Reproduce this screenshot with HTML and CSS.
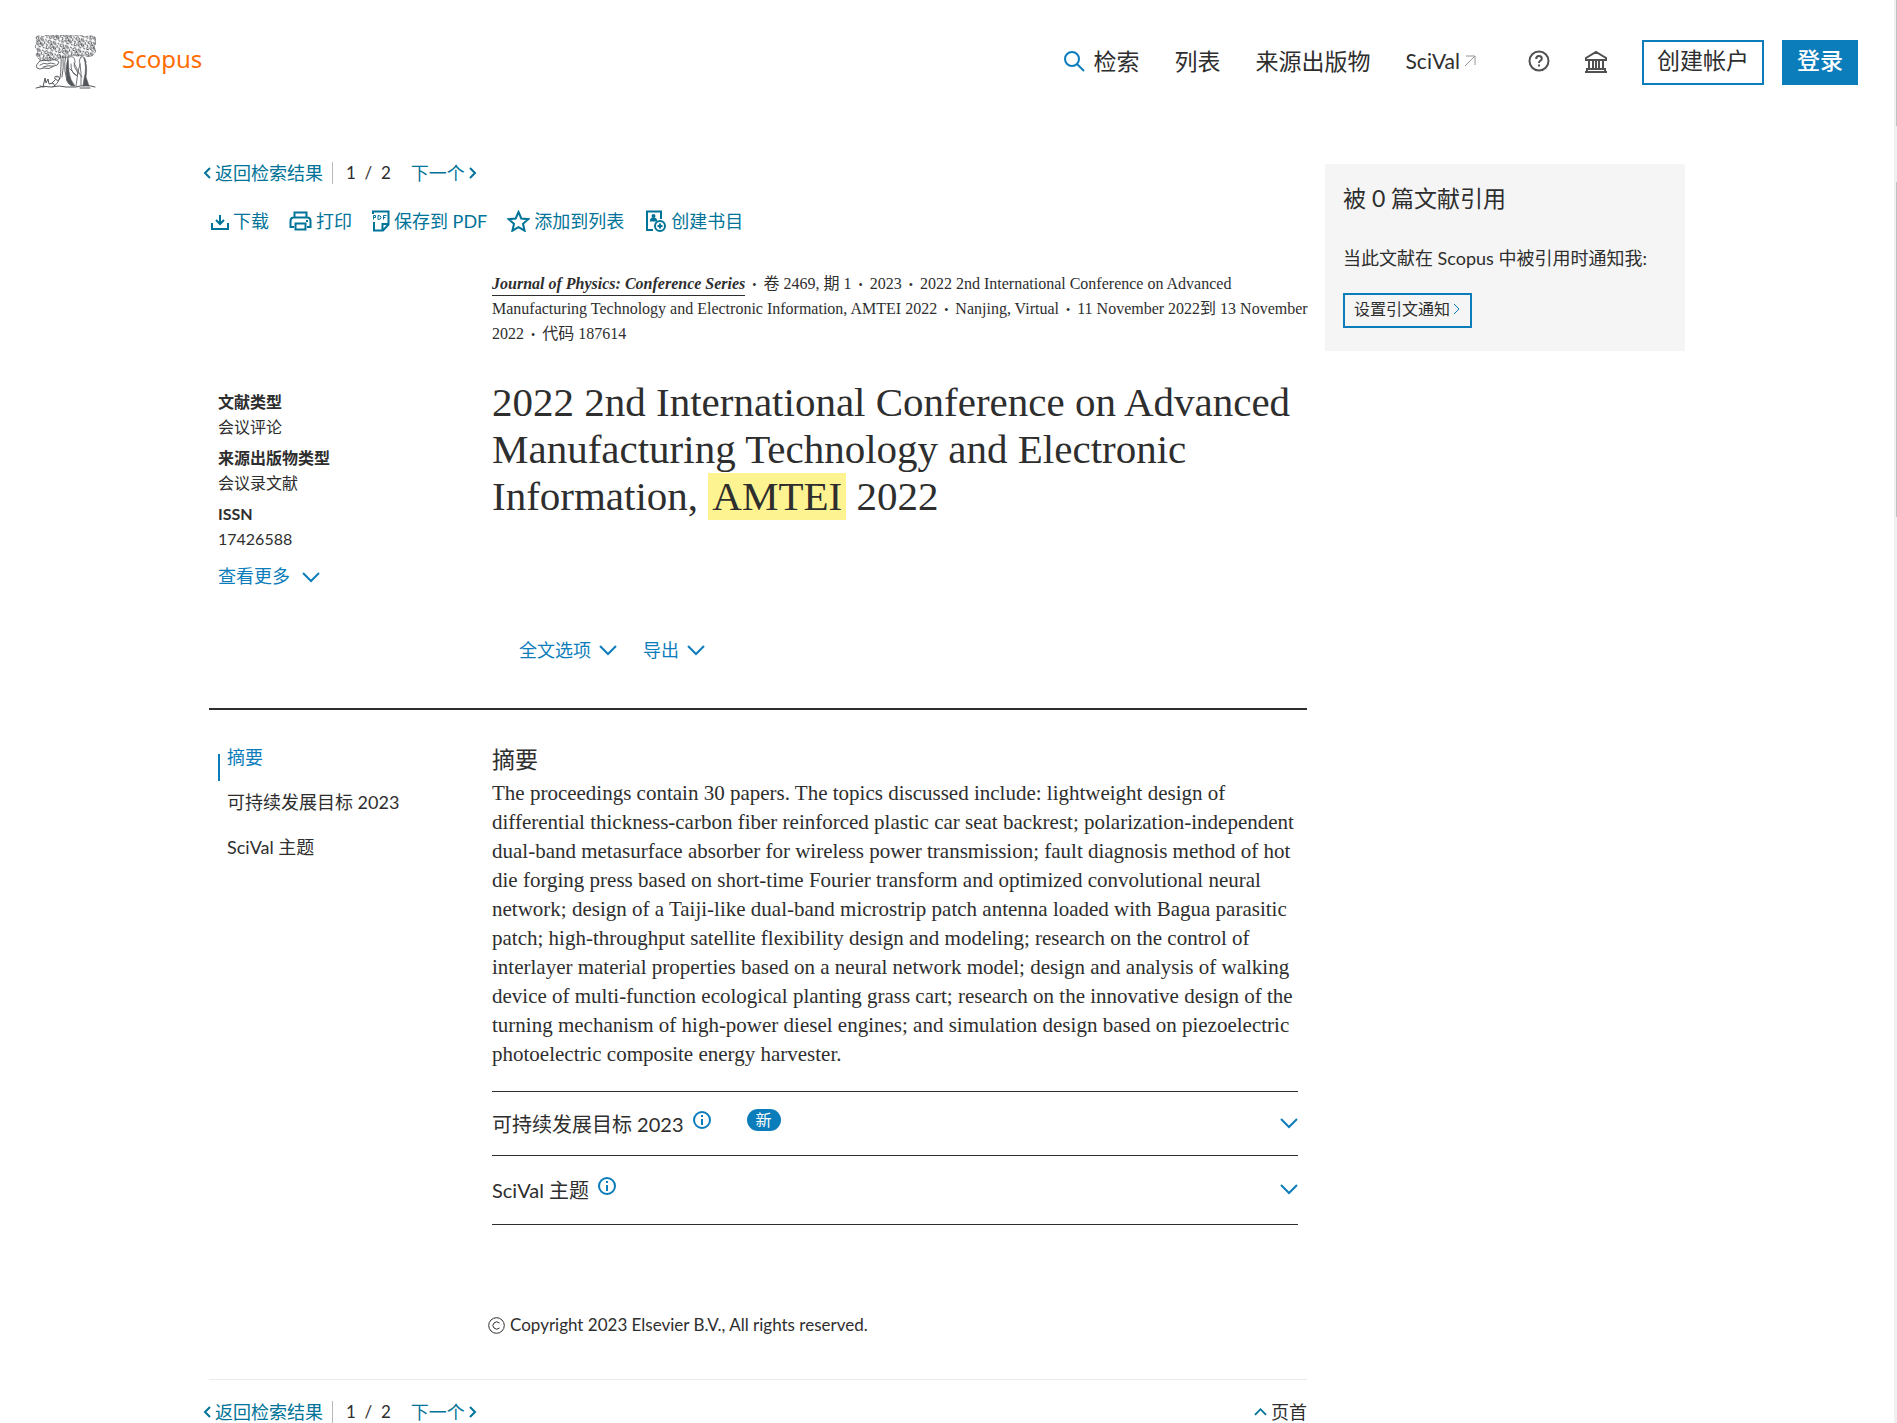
FILE: index.html
```html
<!DOCTYPE html>
<html lang="zh-CN">
<head>
<meta charset="utf-8">
<title>Scopus - 文献详情</title>
<link rel="stylesheet" href="styles.css">
</head>
<body>
<svg class="sprite" aria-hidden="true">
  <symbol id="down" viewBox="0 0 18 18"><path d="M1 5l8 8 8-8"/></symbol>
  <symbol id="left" viewBox="0 0 8 14"><path d="M7 2L2 7l5 5"/></symbol>
  <symbol id="right" viewBox="0 0 8 14"><path d="M1 2l5 5-5 5"/></symbol>
  <symbol id="up" viewBox="0 0 14 10"><path d="M1 8l6-6 6 6"/></symbol>
  <symbol id="info" viewBox="0 0 18 18"><circle cx="9" cy="9" r="8"/><path d="M9 8v6M9 4v2"/></symbol>
</svg>
<header class="header">
  <a class="brand" href="#">
    <svg class="tree" viewBox="0 0 61 54" aria-hidden="true">
      <defs>
        <pattern id="leaves" width="13" height="11" patternUnits="userSpaceOnUse" patternTransform="rotate(17)">
          <path d="M1 2q2-3 4 0q-1 3-4 1zM6 1q3-1 4 2q-3 1-4-2M4 5q3-2 4 1q-2 3-4-1M0 5l2 1-1 3M8 6q3-1 3 2q-3 1-3-2M3 8q2-1 3 1M5 3l2 2M11 3l1 3M11 9l2 1M1 10l3-1M6 9l3 1M11 1l2 1" fill="none" stroke="#53565a"/>
        </pattern>
      </defs>
      <path d="M1 2Q4 0 8 2Q11-1 16 1Q20-1 24 1Q29-1 33 1Q38-1 42 1Q47 0 50 2Q56 0 60 2L61 8L59 12L61 16L58 20Q54 23 49 20Q43 22 38 20L34 21Q30 24 26 22Q22 26 17 24Q10 27 4 24L1 20L3 16L0 12L2 7Z" fill="url(#leaves)" stroke="#53565a" stroke-width=".7" stroke-dasharray="4 1"/>
      <g fill="none" stroke="#53565a" stroke-linecap="round" stroke-linejoin="round">
        <path d="M5 26q5-2 9 0q6-3 10 1q-1 4-5 4q-5 4-10 2q-5 2-7 0q-2-3 3-7zM5 30q4-3 7-1q4-2 8 0M8 32q5-2 10-1" stroke-width=".9"/>
        <path d="M25 20q2 5 1 10q0 8-1 13q-2 6-7 9M31 20q-2 7-1 16l2 10q1 3 5 5M28 22q1 11-1 20" stroke-width=".9"/>
        <path d="M34 22q6-2 6 5l-1 4l4 7q-1 4-4 1q-3-3-3-10M46 22q4-2 5 5M46 22q-3 3-1 7l-2 8l-2 14M45 29l1 9v12M39 28l5 10 3 4M35 34l7 7" stroke-width=".8"/>
        <path d="M33 22q-3 11-1 23q2 6 8 6q-5-6-6-14z" fill="#53565a" stroke-width=".6"/>
        <path d="M49 23q3 10 0 21l-1 7h6l-3-9q2-12-2-19z" fill="#53565a" stroke-width=".6"/>
        <path d="M8 52l2-9 1 5 2-4 1 5 4-1 2 3M22 42q-3-2-2 2q3 3 5 0q-1-3-3-3M20 45l-3 3M1 53q8-3 15-1q9-2 15 0h10q10-3 19 0M5 51l4 1M45 53h10" stroke-width="1"/>
      </g>
    </svg>
    <span>Scopus</span>
  </a>
  <nav class="topnav" aria-label="主导航">
    <a href="#"><svg class="ico search" viewBox="0 0 22 22"><circle cx="9" cy="9" r="7"/><path d="M14 14l7 7"/></svg>检索</a>
    <a href="#">列表</a>
    <a href="#">来源出版物</a>
    <a class="scival" href="#">SciVal<svg class="ico ext" viewBox="0 0 12 12"><path d="M1 11L11 1M2 1h9v9"/></svg></a>
  </nav>
  <div class="tools">
    <button aria-label="帮助"><svg class="ico help" viewBox="0 0 22 22"><circle cx="11" cy="11" r="9.5"/><path d="M8.200 9q0-3 2.800-3t2.800 2.500q0 1.500-1.800 2.500q-1 .6-1 2M11 14.500v2"/></svg></button>
    <button aria-label="机构"><svg class="ico inst" viewBox="0 0 24 24"><path d="M2 8l10-6 10 6v2H2zM1 22h22M3 19h18v3H3zM5 10v9M9 10v9M12 10v9M15 10v9M19 10v9"/></svg></button>
  </div>
  <div class="account">
    <button class="create">创建帐户</button>
    <button class="login">登录</button>
  </div>
</header>

<div class="page">
  <main class="record">
    <nav class="pager" aria-label="检索结果">
      <a class="back" href="#"><svg class="ico chev"><use href="#left"/></svg>返回检索结果</a>
      <span class="count">1&nbsp; /&nbsp; 2</span>
      <a href="#">下一个<svg class="ico chev"><use href="#right"/></svg></a>
    </nav>
    <div class="actions">
      <button><svg class="ico a18" viewBox="0 0 18 18"><path d="M1 11v6h16v-6M9 3v9M5 8l4 4 4-4"/></svg>下载</button>
      <button><svg class="ico a23" viewBox="0 0 23 22"><path d="M5.500 7V2.500h12V7M5 17H1.500v-6q0-3.500 3-3.500h14q3 0 3 3.500v6H18M6.500 13.500h10v6h-10zM17 11h2"/></svg>打印</button>
      <button><svg class="ico a18 pdf" viewBox="0 0 18 22"><path d="M1 4V1.500h15.500v13L11 20.500H2V12M10.500 20v-6H16"/><path class="fine" d="M1.500 9.500v-4h2v2h-2M6 5.500v4q3 0 3-2t-3-2M11.500 9.500v-4h3M11.500 7.500h2"/></svg>保存到 PDF</button>
      <button><svg class="ico a23" viewBox="0 0 23 22"><path d="M11.500 2l2.800 6.500 7 .7-5.300 4.600 1.600 6.900-6.100-3.600-6.100 3.600L7 13.800 1.700 9.200l7-.7z"/></svg>添加到列表</button>
      <button><svg class="ico a23" viewBox="0 0 23 22"><path d="M9 20H3V1.500h14V9M7 10.500q0-2 2.500-2t2.500 2z"/><circle cx="9.500" cy="6" r="1"/><circle cx="16" cy="16" r="5"/><path d="M16 13.500v5M13.500 16h5"/></svg>创建书目</button>
    </div>

    <div class="columns intro">
      <aside class="facts">
        <dl>
          <dt>文献类型</dt><dd>会议评论</dd>
          <dt>来源出版物类型</dt><dd>会议录文献</dd>
          <dt>ISSN</dt><dd>17426588</dd>
        </dl>
        <button class="more">查看更多<svg class="ico d18"><use href="#down"/></svg></button>
      </aside>
      <div class="content">
        <p class="source"><a href="#">Journal of Physics: Conference Series</a><b>•</b>卷 2469, 期 1<b>•</b>2023<b>•</b>2022 2nd International Conference on Advanced<br>Manufacturing Technology and Electronic Information, AMTEI 2022<b>•</b>Nanjing, Virtual<b>•</b>11 November 2022到 13 November<br>2022<b>•</b>代码 187614</p>
        <h1>2022 2nd International Conference on Advanced<br>Manufacturing Technology and Electronic<br>Information, <mark>AMTEI</mark> 2022</h1>
        <div class="menus">
          <button>全文选项<svg class="ico d18"><use href="#down"/></svg></button>
          <button>导出<svg class="ico d18"><use href="#down"/></svg></button>
        </div>
      </div>
    </div>

    <div class="columns body">
      <nav class="sections" aria-label="页内导航">
        <a class="current" href="#abstract">摘要</a>
        <a href="#goals">可持续发展目标 2023</a>
        <a href="#topics">SciVal 主题</a>
      </nav>
      <div class="content">
        <section id="abstract">
          <h2>摘要</h2>
          <p class="abstract">The proceedings contain 30 papers. The topics discussed include: lightweight design of<br>differential thickness-carbon fiber reinforced plastic car seat backrest; polarization-independent<br>dual-band metasurface absorber for wireless power transmission; fault diagnosis method of hot<br>die forging press based on short-time Fourier transform and optimized convolutional neural<br>network; design of a Taiji-like dual-band microstrip patch antenna loaded with Bagua parasitic<br>patch; high-throughput satellite flexibility design and modeling; research on the control of<br>interlayer material properties based on a neural network model; design and analysis of walking<br>device of multi-function ecological planting grass cart; research on the innovative design of the<br>turning mechanism of high-power diesel engines; and simulation design based on piezoelectric<br>photoelectric composite energy harvester.</p>
        </section>
        <section class="fold" id="goals">
          <h3>可持续发展目标 2023</h3>
          <button aria-label="说明"><svg class="ico i18"><use href="#info"/></svg></button>
          <span class="new">新</span>
          <button class="toggle" aria-label="展开"><svg class="ico d18"><use href="#down"/></svg></button>
        </section>
        <section class="fold last" id="topics">
          <h3>SciVal 主题</h3>
          <button aria-label="说明"><svg class="ico i18"><use href="#info"/></svg></button>
          <button class="toggle" aria-label="展开"><svg class="ico d18"><use href="#down"/></svg></button>
        </section>
        <p class="copyright"><svg class="ico copy" viewBox="0 0 17 17"><circle cx="8.500" cy="8.500" r="7.800"/><path d="M11.500 6q-3-2.500-5.500 0t0 5q2.500 2.500 5.500 0"/></svg>Copyright 2023 Elsevier B.V., All rights reserved.</p>
      </div>
    </div>

    <div class="bottom">
      <nav class="pager" aria-label="检索结果">
        <a class="back" href="#"><svg class="ico chev"><use href="#left"/></svg>返回检索结果</a>
        <span class="count">1&nbsp; /&nbsp; 2</span>
        <a href="#">下一个<svg class="ico chev"><use href="#right"/></svg></a>
      </nav>
      <a class="totop" href="#"><svg class="ico upi"><use href="#up"/></svg>页首</a>
    </div>
  </main>

  <aside class="cited">
    <h2>被 0 篇文献引用</h2>
    <p>当此文献在 Scopus 中被引用时通知我:</p>
    <button>设置引文通知<svg class="ico chev"><use href="#right"/></svg></button>
  </aside>
</div>
<div class="scroll" aria-hidden="true"><i class="outer"></i><i class="inner"></i></div>
</body>
</html>
```
FILE: styles.css
```css
* { box-sizing: border-box; }
html, body { margin: 0; }
body {
  position: relative;
  height: 100vh;
  overflow: hidden;
  padding-right: 3px;
  background: #fff;
  color: #2e2e2e;
  font: 16px/24px "Lato", "Noto Sans CJK SC", sans-serif;
}
a { color: inherit; text-decoration: none; }
button { padding: 0; border: 0; background: none; color: inherit; font: inherit; white-space: nowrap; }
h1, h2, h3, p, dl, dd { margin: 0; font-weight: 400; }
.sprite { display: none; }
.ico { flex: none; fill: none; stroke: currentColor; stroke-width: 2; }

.header { display: flex; align-items: center; height: 124px; padding: 0 36px 0 35px; font-size: 23px; line-height: 28px; }
.brand { display: flex; align-items: center; gap: 26px; margin-right: auto; color: #ff6c00; font: 24px/32px "Noto Sans", sans-serif; }
.brand span { padding-bottom: 6px; }
.tree { width: 61px; height: 54px; }
.topnav { display: flex; align-items: center; gap: 35px; padding-bottom: 2px; }
.topnav a { display: flex; align-items: center; }
.topnav .scival { font-size: 21px; }
.search { width: 22px; height: 22px; margin-right: 9px; color: #0c7dbb; }
.ext { width: 12px; height: 12px; margin-left: 4px; color: #969696; stroke-width: 1; }
.tools { display: flex; gap: 34px; margin: 0 34px 0 52px; color: #505050; }
.tools button { display: flex; }
.help { width: 22px; height: 22px; }
.inst { width: 24px; height: 24px; }
.account { display: flex; gap: 18px; }
.account button { height: 45px; padding: 0 13px 4px; border: 2px solid #0c7dbb; }
.account .login { background: #0c7dbb; color: #fff; font-weight: 500; }

.page { display: grid; grid-template-columns: minmax(0, 1098fr) minmax(0, 360fr); gap: 18px; align-items: start; max-width: 1476px; margin: 0 auto; padding-top: 36px; }
.pager { display: flex; align-items: center; height: 26px; margin-left: -6px; color: #007398; font-size: 18px; }
.pager a { display: flex; align-items: center; gap: 4px; line-height: 22px; }
.pager .back { padding-right: 9px; border-right: 1px solid #b9b9b9; }
.count { margin: 0 20px 0 13px; color: #2e2e2e; font-size: 17px; }
.chev { width: 8px; height: 14px; stroke-width: 1; }
.pager .chev { stroke-width: 2; }
.actions { display: flex; align-items: center; gap: 20px; height: 26px; margin-top: 22px; padding-left: 2px; color: #007398; font-size: 18px; }
.actions button { display: flex; align-items: center; gap: 4px; }
.a18 { width: 18px; height: 18px; }
.a23 { width: 23px; height: 22px; }
.pdf { height: 22px; }
.fine { stroke-width: 1; }

.columns { display: grid; grid-template-columns: 283px minmax(0, 1fr); }
.content { padding-right: 9px; }
.intro { padding-top: 37px; }
.facts { padding: 118px 0 0 9px; font-size: 16px; line-height: 25px; }
.facts dt { font-weight: 700; }
.facts dd { margin-bottom: 6px; }
.more { display: flex; align-items: center; gap: 12px; margin-top: 13px; color: #0c7dbb; font-size: 18px; }
.d18 { width: 18px; height: 18px; color: #0c7dbb; }
.source { font: 16px/25px "Liberation Serif", "Noto Sans CJK SC", serif; white-space: nowrap; }
.source a { padding-bottom: 3px; border-bottom: 1px solid #2e2e2e; font-weight: 700; font-style: italic; }
.source b { margin: 0 7px; font-size: 12px; line-height: 1; font-weight: 400; }
h1 { margin-top: 33px; font: 41px/47px "Liberation Serif", serif; white-space: nowrap; }
mark { padding: 0 4px 1px; background: #fef391; color: inherit; }
.menus { display: flex; gap: 26px; margin-top: 117px; padding-left: 27px; color: #0c7dbb; font-size: 18px; }
.menus button { display: flex; align-items: center; gap: 8px; line-height: 26px; }

.body { margin-top: 45px; padding-top: 34px; border-top: 2px solid #2e2e2e; }
.sections { display: flex; flex-direction: column; gap: 18px; align-items: flex-start; padding-left: 18px; font-size: 18px; line-height: 27px; }
.sections a { position: relative; }
.sections .current { color: #0c7dbb; }
.sections .current::before { content: ""; position: absolute; left: -9px; top: 10px; height: 27px; border-left: 2px solid #0c7dbb; }
.content h2 { font-size: 23px; line-height: 30px; }
.abstract { margin-top: 5px; font: 21px/29px "Liberation Serif", serif; white-space: nowrap; }
.fold { display: flex; align-items: center; height: 64px; border-top: 1px solid #2e2e2e; }
#goals { margin-top: 22px; }
.fold.last { height: 70px; border-bottom: 1px solid #2e2e2e; }
.fold h3 { font-size: 20px; line-height: 30px; }
.fold button { display: flex; margin: 0 0 8px 9px; color: #0c7dbb; }
.i18 { width: 18px; height: 18px; }
.fold .toggle { margin: 0 0 2px auto; }
.new { margin: 0 0 8px 36px; padding: 0 9px; border-radius: 11px; background: #0c7dbb; color: #fff; font-size: 16px; line-height: 22px; }
.copyright { display: flex; align-items: center; gap: 5px; margin: 87px 0 0 -4px; font-size: 17px; line-height: 26px; }
.copy { width: 17px; height: 17px; stroke-width: 1; }
.bottom { display: flex; align-items: center; justify-content: space-between; margin-top: 41px; padding-top: 19px; border-top: 1px solid #ebebeb; font-size: 18px; }
.totop { display: flex; align-items: center; gap: 4px; line-height: 22px; }
.upi { width: 13px; height: 10px; color: #007398; }

.cited { margin-top: 4px; padding: 18px 18px 23px; background: #f5f5f5; }
.cited h2 { font-size: 23px; line-height: 32px; }
.cited p { margin-top: 31px; font-size: 18px; line-height: 26px; white-space: nowrap; }
.cited button { display: flex; align-items: center; gap: 3px; height: 35px; margin-top: 22px; padding: 0 9px 4px; border: 2px solid #0c7dbb; font-size: 16px; }
.cited .chev { color: #0c7dbb; }

.scroll { position: absolute; inset: 0 0 0 auto; width: 3px; background: #f0f0f0; }
.scroll i { position: absolute; right: 0; width: 1px; background: #c1c1c1; }
.scroll .outer { top: 0; height: 126px; }
.scroll .inner { top: 182px; height: 335px; }
```
